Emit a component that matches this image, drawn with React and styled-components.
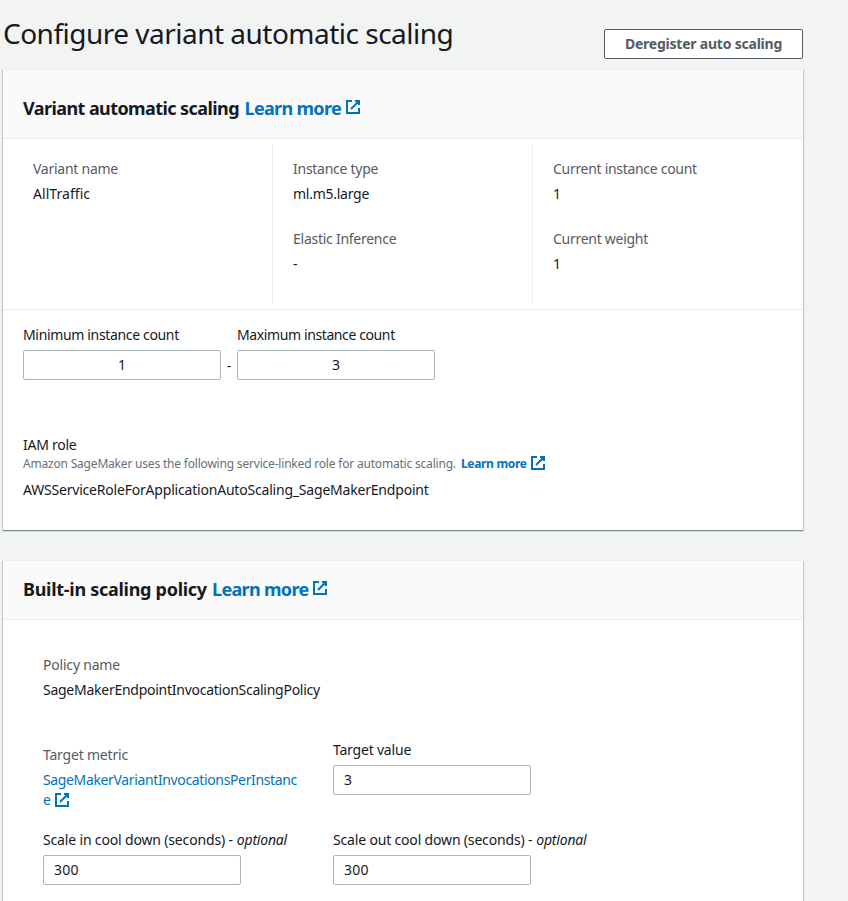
import React from "react";
import styled, { createGlobalStyle, css } from "styled-components";

const Global = createGlobalStyle`
  * { box-sizing: border-box; }
  html, body { margin: 0; height: 100%; background: #f2f3f3; overflow: hidden; }
  body {
    font-family: "Noto Sans", "Open Sans", sans-serif;
    font-size: 14px;
    line-height: 20px;
    color: #16191f;
  }
`;

const Page = styled.main`
  height: 901px;
  width: 803px;
  padding-left: 3px;
  overflow: visible;
`;

const PageHeader = styled.header`
  display: flex;
  justify-content: space-between;
  align-items: flex-start;
  height: 69px;
`;

const Title = styled.h1`
  margin: 15px 0 0;
  font-size: 28px;
  line-height: 36px;
  font-weight: 400;
  letter-spacing: -0.51px;
  white-space: nowrap;
`;

const Button = styled.button`
  margin: 29px 0 0;
  width: 199px;
  height: 30px;
  padding: 0;
  border: 1px solid #545b64;
  border-radius: 2px;
  background: #fff;
  color: #545b64;
  font: 700 14px/20px "Noto Sans", "Open Sans", sans-serif;
  letter-spacing: -0.22px;
`;

const Panel = styled.section`
  width: 800px;
  height: ${(p) => p.$height}px;
  margin-bottom: 30px;
  border-top: 1px solid #eaeded;
  background: #fff;
  box-shadow: 0 1px 1px 0 rgba(0, 28, 36, 0.3), 1px 1px 1px 0 rgba(0, 28, 36, 0.15),
    -1px 1px 1px 0 rgba(0, 28, 36, 0.15);
`;

const PanelHeader = styled.div`
  display: flex;
  align-items: flex-start;
  padding: ${(p) => p.$top}px 20px 19px;
  border-bottom: 1px solid #eaeded;
  background: #fafafa;
`;

const Heading = styled.h2`
  width: ${(p) => p.$width}px;
  margin: 0;
  font-size: 18px;
  line-height: 22px;
  font-weight: 700;
  letter-spacing: ${(p) => p.$track}px;
  white-space: nowrap;
`;

const HeadingLink = styled.a`
  display: flex;
  gap: 4px;
  color: #0073bb;
  font-size: 18px;
  line-height: 22px;
  font-weight: 700;
  letter-spacing: -0.68px;
  white-space: nowrap;
`;

const IconSvg = styled.svg`
  display: block;
  flex: none;
  width: 16px;
  height: 16px;
  margin-top: ${(p) => p.$shift || 0}px;
  fill: none;
  stroke: #0073bb;
  stroke-width: 2;
`;

const tracked = css`
  letter-spacing: ${(p) => (p.$track === undefined ? -0.26 : p.$track)}px;
  white-space: nowrap;
`;

const Label = styled.div`
  color: #545b64;
  ${tracked}
`;

const Value = styled.div`
  margin-top: 5px;
  ${tracked}
`;

const Summary = styled.div`
  display: grid;
  grid-template-columns: 270px 260px 270px;
  padding: 5px 0;
  height: 171px;
  border-bottom: 1px solid #eaeded;
`;

const SummaryColumn = styled.div`
  display: flex;
  flex-direction: column;
  gap: 25px;
  height: 160px;
  padding: 15px 0 0 ${(p) => p.$left}px;
  border-right: ${(p) => (p.$last ? "0" : "1px solid #eaeded")};
`;

const CountRow = styled.div`
  display: flex;
  align-items: flex-end;
  padding: 15px 20px 0;
`;

const Dash = styled.span`
  width: 16px;
  height: 24px;
  text-align: center;
`;

const FieldLabel = styled.label`
  display: block;
  ${tracked}
`;

const Optional = styled.em`
  margin-left: 4px;
  letter-spacing: -0.2px;
`;

const Input = styled.input`
  display: block;
  width: 198px;
  height: 30px;
  margin-top: 5px;
  padding: 0 10px 2px;
  border: 1px solid #aab7b8;
  border-radius: 2px;
  background: #fff;
  color: #16191f;
  font: 400 14px/20px "Noto Sans", "Open Sans", sans-serif;
  letter-spacing: 0.2px;
  text-align: ${(p) => (p.$center ? "center" : "left")};
`;

const Role = styled.div`
  padding: 55px 20px 0;
`;

const Help = styled.div`
  display: flex;
  height: 18px;
  margin-bottom: 7px;
  color: #687078;
  font-size: 12px;
  line-height: 18px;
  letter-spacing: -0.195px;
  white-space: nowrap;
`;

const HelpLink = styled.a`
  display: flex;
  gap: 3px;
  margin-left: 5px;
  color: #0073bb;
  font-weight: 700;
  letter-spacing: -0.3px;
`;

const RoleName = styled.div`
  letter-spacing: -0.2px;
`;

const Policy = styled.div`
  padding: 35px 40px 0;
`;

const FieldGrid = styled.div`
  display: grid;
  grid-template-columns: 290px 290px;
  row-gap: 20px;
  padding-top: 40px;
`;

const Metric = styled.div`
  padding-top: 5px;
`;

const MetricLink = styled.a`
  display: block;
  margin-top: 5px;
  color: #0073bb;
  letter-spacing: -0.36px;
  white-space: nowrap;
`;

const MetricTail = styled.span`
  display: flex;
  gap: 3px;
`;

const ExternalIcon = ({ shift }) => (
  <IconSvg viewBox="0 0 16 16" $shift={shift} aria-hidden="true">
    <path d="M10 2h4v4M6 10l8-8M14 9.048V14H2V2h5" />
  </IconSvg>
);

const Pair = ({ label, value, track, valueTrack }) => (
  <div>
    <Label $track={track}>{label}</Label>
    <Value $track={valueTrack}>{value}</Value>
  </div>
);

const Field = ({ label, value, track, center, optional }) => (
  <div>
    <FieldLabel $track={track}>
      {label}
      {optional && <Optional>optional</Optional>}
    </FieldLabel>
    <Input defaultValue={value} $center={center} />
  </div>
);

export default function App() {
  return (
    <>
      <Global />
      <Page>
        <PageHeader>
          <Title>Configure variant automatic scaling</Title>
          <Button>Deregister auto scaling</Button>
        </PageHeader>

        <Panel $height={461}>
          <PanelHeader $top={27}>
            <Heading $width={221.5} $track={-0.58}>Variant automatic scaling</Heading>
            <HeadingLink>
              Learn more
              <ExternalIcon shift={2} />
            </HeadingLink>
          </PanelHeader>
          <Summary>
            <SummaryColumn $left={30}>
              <Pair label="Variant name" value="AllTraffic" valueTrack={0.05} />
            </SummaryColumn>
            <SummaryColumn $left={20}>
              <Pair label="Instance type" value="ml.m5.large" />
              <Pair label="Elastic Inference" value="-" />
            </SummaryColumn>
            <SummaryColumn $left={20} $last>
              <Pair label="Current instance count" value="1" track={-0.3} />
              <Pair label="Current weight" value="1" track={-0.28} />
            </SummaryColumn>
          </Summary>
          <CountRow>
            <Field label="Minimum instance count" value="1" track={-0.34} center />
            <Dash>-</Dash>
            <Field label="Maximum instance count" value="3" track={-0.39} center />
          </CountRow>
          <Role>
            <FieldLabel>IAM role</FieldLabel>
            <Help>
              Amazon SageMaker uses the following service-linked role for automatic scaling.
              <HelpLink>
                Learn more
                <ExternalIcon />
              </HelpLink>
            </Help>
            <RoleName>AWSServiceRoleForApplicationAutoScaling_SageMakerEndpoint</RoleName>
          </Role>
        </Panel>

        <Panel $height={341}>
          <PanelHeader $top={17}>
            <Heading $width={189} $track={-0.28}>Built-in scaling policy</Heading>
            <HeadingLink>
              Learn more
              <ExternalIcon shift={2} />
            </HeadingLink>
          </PanelHeader>
          <Policy>
            <Pair
              label="Policy name"
              value="SageMakerEndpointInvocationScalingPolicy"
              track={-0.2}
              valueTrack={-0.26}
            />
            <FieldGrid>
              <Metric>
                <Label $track={-0.2}>Target metric</Label>
                <MetricLink>
                  SageMakerVariantInvocationsPerInstanc
                  <MetricTail>
                    e
                    <ExternalIcon shift={2} />
                  </MetricTail>
                </MetricLink>
              </Metric>
              <Field label="Target value" value="3" track={-0.2} />
              <Field label="Scale in cool down (seconds) -" value="300" track={-0.16} optional />
              <Field label="Scale out cool down (seconds) -" value="300" track={-0.17} optional />
            </FieldGrid>
          </Policy>
        </Panel>
      </Page>
    </>
  );
}
